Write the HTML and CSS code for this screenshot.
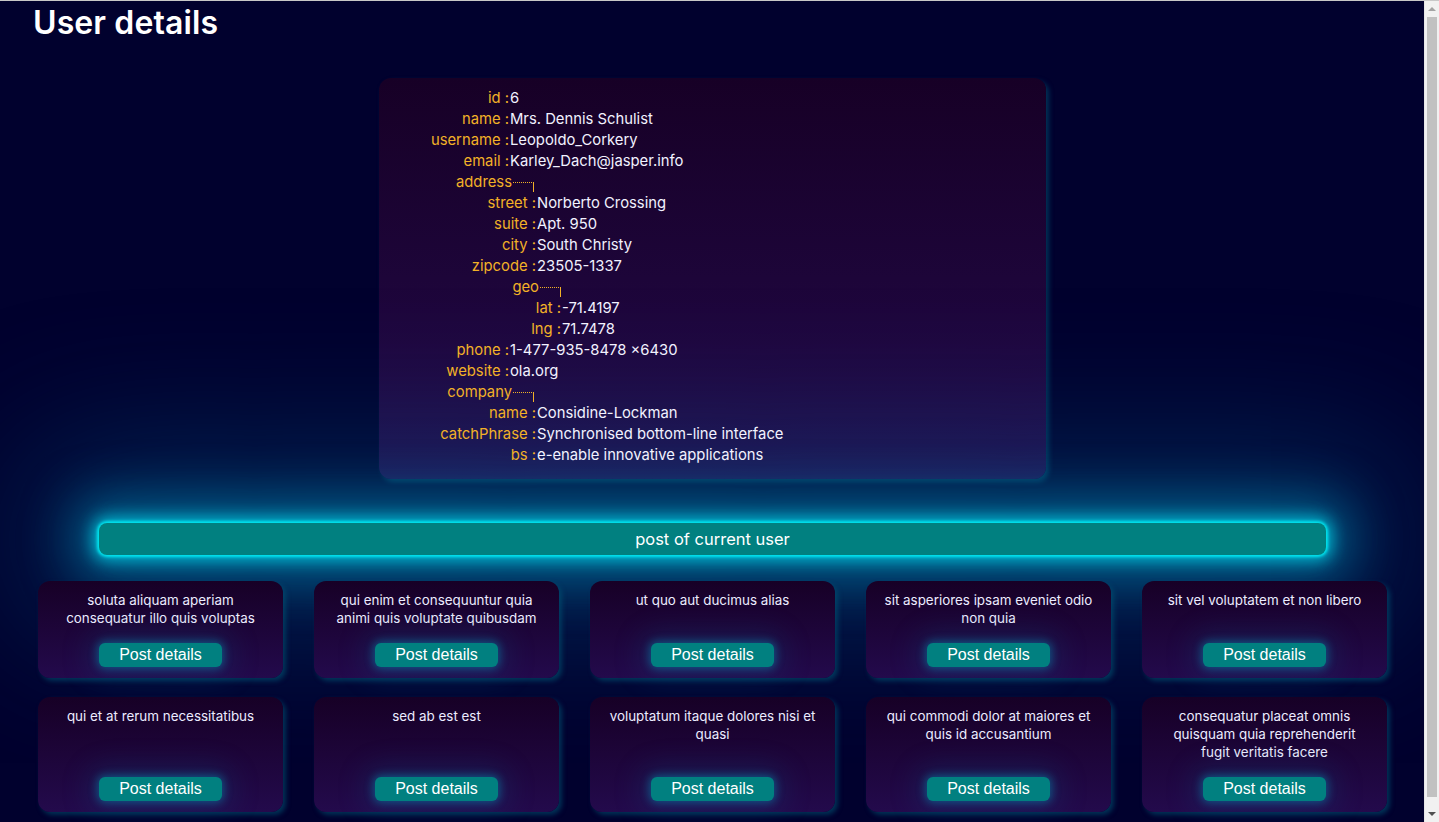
FILE: index.html
```html
<!DOCTYPE html>
<html lang="en">
<head>
<meta charset="utf-8">
<title>User details</title>
<link rel="stylesheet" href="styles.css">
</head>
<body>
<div class="page">
  <h1 class="title">User details</h1>

  <section class="user-card">
    <div class="row"><span class="k">id :</span><span class="v">6</span></div>
    <div class="row"><span class="k">name :</span><span class="v">Mrs. Dennis Schulist</span></div>
    <div class="row"><span class="k">username :</span><span class="v">Leopoldo_Corkery</span></div>
    <div class="row"><span class="k">email :</span><span class="v">Karley_Dach@jasper.info</span></div>
    <div class="row head h1w"><span class="k">address<span class="conn"></span></span></div>
    <div class="row l1"><span class="k">street :</span><span class="v">Norberto Crossing</span></div>
    <div class="row l1"><span class="k">suite :</span><span class="v">Apt. 950</span></div>
    <div class="row l1"><span class="k">city :</span><span class="v">South Christy</span></div>
    <div class="row l1"><span class="k">zipcode :</span><span class="v">23505-1337</span></div>
    <div class="row head h2w"><span class="k">geo<span class="conn"></span></span></div>
    <div class="row l2"><span class="k">lat :</span><span class="v">-71.4197</span></div>
    <div class="row l2"><span class="k">lng :</span><span class="v">71.7478</span></div>
    <div class="row"><span class="k">phone :</span><span class="v">1-477-935-8478 x6430</span></div>
    <div class="row"><span class="k">website :</span><span class="v">ola.org</span></div>
    <div class="row head h1w"><span class="k">company<span class="conn"></span></span></div>
    <div class="row l1"><span class="k">name :</span><span class="v">Considine-Lockman</span></div>
    <div class="row l1"><span class="k">catchPhrase :</span><span class="v">Synchronised bottom-line interface</span></div>
    <div class="row l1"><span class="k">bs :</span><span class="v">e-enable innovative applications</span></div>
  </section>

  <div class="posts-bar">post of current user</div>

  <section class="posts">
    <article class="post"><p>soluta aliquam aperiam consequatur illo quis voluptas</p><button class="btn">Post details</button></article>
    <article class="post"><p>qui enim et consequuntur quia animi quis voluptate quibusdam</p><button class="btn">Post details</button></article>
    <article class="post"><p>ut quo aut ducimus alias</p><button class="btn">Post details</button></article>
    <article class="post"><p>sit asperiores ipsam eveniet odio non quia</p><button class="btn">Post details</button></article>
    <article class="post"><p>sit vel voluptatem et non libero</p><button class="btn">Post details</button></article>
    <article class="post"><p>qui et at rerum necessitatibus</p><button class="btn">Post details</button></article>
    <article class="post"><p>sed ab est est</p><button class="btn">Post details</button></article>
    <article class="post"><p>voluptatum itaque dolores nisi et quasi</p><button class="btn">Post details</button></article>
    <article class="post"><p>qui commodi dolor at maiores et quis id accusantium</p><button class="btn">Post details</button></article>
    <article class="post"><p>consequatur placeat omnis quisquam quia reprehenderit fugit veritatis facere</p><button class="btn">Post details</button></article>
  </section>
</div>

<div class="scrollbar" aria-hidden="true">
  <div class="sb-btn"><span class="arrow up"></span></div>
  <div class="sb-track"><div class="sb-thumb"></div></div>
  <div class="sb-btn"><span class="arrow down"></span></div>
</div>
</body>
</html>
```

FILE: styles.css
```css
html, body {
  margin: 0;
  padding: 0;
  background: #01012e;
}

body {
  font-family: "Inter", "Noto Sans", sans-serif;
  color: #f2f2ff;
  border-top: 1px solid #c8c8c8;
}

.page {
  margin-right: 15px;
  padding: 0 37px 19px 38px;
}

.title {
  margin: 0 0 0 -5px;
  font-size: 32px;
  line-height: 44px;
  font-weight: 600;
  color: #ffffff;
  letter-spacing: 0.1px;
}

.user-card {
  width: 667px;
  margin: 33px auto 0;
  padding: 10px 0 13px;
  box-sizing: border-box;
  border-radius: 12px;
  background: linear-gradient(180deg, #170026 0%, #230a4c 100%);
  box-shadow: 3px 3px 5px rgba(0, 90, 120, 0.55);
  font-size: 14.8px;
  line-height: 21px;
}

.row {
  display: flex;
  white-space: nowrap;
}

.k {
  flex: 0 0 130px;
  text-align: right;
  color: #f2b127;
}

.l1 .k { flex-basis: 157px; }
.l2 .k { flex-basis: 182px; }
.h1w .k { flex-basis: 155px; }
.h2w .k { flex-basis: 182px; }

.v {
  padding-left: 1px;
  color: #f2f2ff;
}

.conn {
  display: inline-block;
  width: 21px;
  height: 10px;
  margin-left: 1px;
  border-top: 1px dotted #f2b127;
  border-right: 1px solid #f2b127;
  vertical-align: -5px;
  box-sizing: border-box;
}

.posts-bar {
  margin: 44px 61px 0 61px;
  height: 32px;
  line-height: 32px;
  text-align: center;
  font-size: 16.5px;
  color: #ffffff;
  background: #018080;
  border-radius: 8px;
  box-shadow:
    0 0 3px 2px #00e6f0,
    0 0 16px 6px rgba(0, 215, 235, 0.75),
    0 0 50px 24px rgba(0, 160, 200, 0.5),
    0 0 150px 70px rgba(0, 100, 150, 0.4);
}

.posts {
  margin-top: 26px;
  display: grid;
  grid-template-columns: repeat(5, 245px);
  column-gap: 31px;
  row-gap: 19px;
}

.post {
  display: flex;
  flex-direction: column;
  align-items: center;
  padding: 10px 16px 11px;
  border-radius: 12px;
  background: linear-gradient(180deg, #170026 0%, #230a4c 100%);
  box-shadow: 3px 3px 5px rgba(0, 90, 120, 0.55);
}

.post p {
  margin: 0 0 16px;
  text-align: center;
  font-size: 13.4px;
  line-height: 18px;
  color: #ececff;
}

.btn {
  margin-top: auto;
  width: 123px;
  height: 24px;
  padding: 0;
  border: none;
  border-radius: 6px;
  background: #018080;
  color: #ffffff;
  font-family: "Liberation Sans", Arial, sans-serif;
  font-size: 16px;
  line-height: 24px;
  box-shadow: 0 0 8px 2px rgba(0, 190, 220, 0.35), 0 0 30px 10px rgba(0, 120, 170, 0.18);
}

/* browser scrollbar as seen in the capture */
.scrollbar {
  position: fixed;
  top: 1px;
  right: 0;
  bottom: 0;
  width: 15px;
  display: flex;
  flex-direction: column;
  background: #f1f1f1;
  border-left: 1px solid #e6e6e6;
  box-sizing: border-box;
}

.sb-btn {
  height: 16px;
  display: flex;
  align-items: center;
  justify-content: center;
}

.arrow {
  width: 0;
  height: 0;
  border-left: 4px solid transparent;
  border-right: 4px solid transparent;
}

.arrow.up { border-bottom: 4px solid #a3a3a3; }
.arrow.down { border-top: 4px solid #505050; }

.sb-track {
  flex: 1;
  padding: 0 2px;
  display: flex;
}

.sb-thumb {
  flex: 1;
  margin-bottom: 9px;
  background: #c1c1c1;
}
```
